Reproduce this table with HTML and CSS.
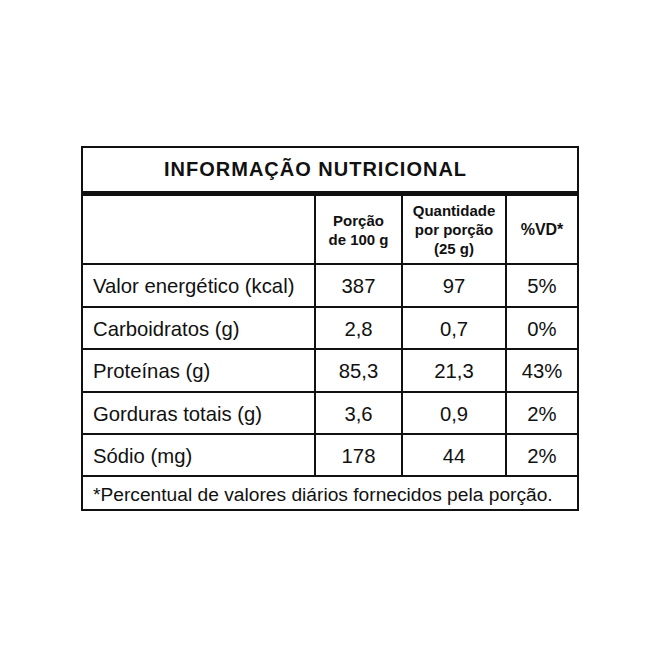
FILE: index.html
```html
<!DOCTYPE html>
<html lang="pt-BR">
<head>
<meta charset="utf-8">
<title>Informação Nutricional</title>
<link rel="stylesheet" href="styles.css">
</head>
<body>
<div class="panel">
  <div class="title">INFORMAÇÃO NUTRICIONAL</div>
  <div class="grid">
    <div class="cell head-empty"></div>
    <div class="cell head">Porção<br>de 100 g</div>
    <div class="cell head">Quantidade<br>por porção<br>(25 g)</div>
    <div class="cell head head-vd">%VD*</div>

    <div class="cell label">Valor energético (kcal)</div>
    <div class="cell num">387</div>
    <div class="cell num">97</div>
    <div class="cell num">5%</div>

    <div class="cell label">Carboidratos (g)</div>
    <div class="cell num">2,8</div>
    <div class="cell num">0,7</div>
    <div class="cell num">0%</div>

    <div class="cell label">Proteínas (g)</div>
    <div class="cell num">85,3</div>
    <div class="cell num">21,3</div>
    <div class="cell num">43%</div>

    <div class="cell label">Gorduras totais (g)</div>
    <div class="cell num">3,6</div>
    <div class="cell num">0,9</div>
    <div class="cell num">2%</div>

    <div class="cell label">Sódio (mg)</div>
    <div class="cell num">178</div>
    <div class="cell num">44</div>
    <div class="cell num">2%</div>
  </div>
  <div class="footer">*Percentual de valores diários fornecidos pela porção.</div>
</div>
</body>
</html>
```

FILE: styles.css
```css
html, body {
  margin: 0;
  padding: 0;
  background: #ffffff;
}

body {
  font-family: "Liberation Sans", Arial, sans-serif;
  color: #111111;
}

.panel {
  box-sizing: border-box;
  width: 498px;
  margin: 146px 0 0 81px;
  border: 2px solid #111111;
}

.title {
  box-sizing: border-box;
  height: 48px;
  border-bottom: 5px solid #111111;
  padding-left: 81px;
  display: flex;
  align-items: center;
  font-weight: bold;
  font-size: 20px;
  letter-spacing: 1px;
}

.grid {
  display: grid;
  grid-template-columns: 231px 85px 102px 70px;
  grid-template-rows: 67px 41px 40px 41px 40px 40px;
  column-gap: 2px;
  row-gap: 2px;
  background: #111111;
}

.cell {
  background: #ffffff;
  display: flex;
  align-items: center;
}

.head {
  justify-content: center;
  text-align: center;
  font-weight: bold;
  font-size: 15px;
  line-height: 19px;
}

.head-vd {
  font-size: 16px;
}

.label {
  padding-left: 10px;
  padding-top: 2px;
  font-size: 20.3px;
}

.num {
  justify-content: center;
  padding-top: 2px;
  font-size: 20.3px;
}

.footer {
  box-sizing: border-box;
  height: 34px;
  border-top: 2px solid #111111;
  padding-left: 10px;
  padding-top: 3px;
  display: flex;
  align-items: center;
  font-size: 19.2px;
}
```
